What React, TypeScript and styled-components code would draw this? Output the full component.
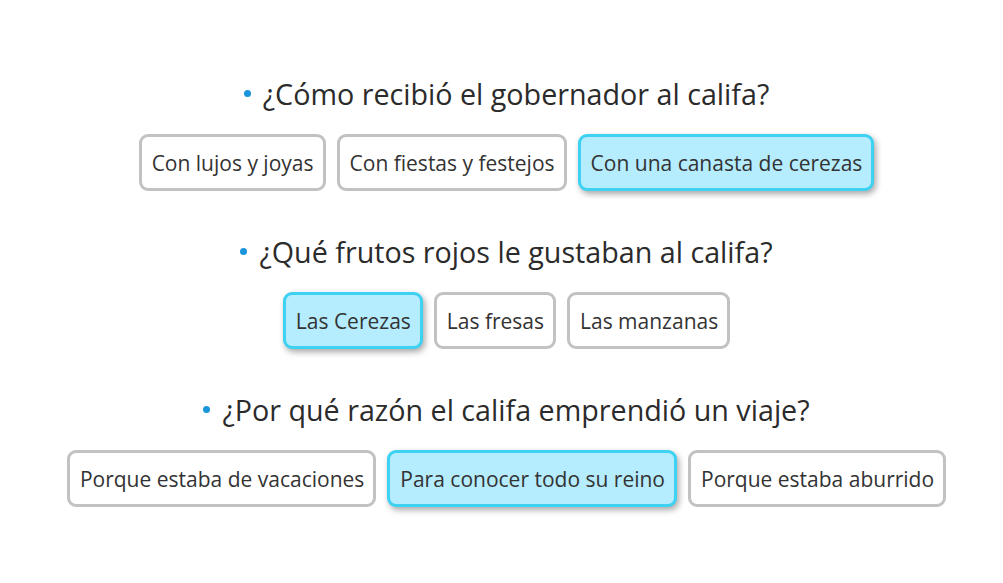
import styled, { createGlobalStyle } from "styled-components";

const GlobalStyle = createGlobalStyle`
  body {
    margin: 0;
    background: #ffffff;
    font-family: "Open Sans", "Noto Sans", sans-serif;
  }
`;

const questions = [
  {
    title: "¿Cómo recibió el gobernador al califa?",
    options: ["Con lujos y joyas", "Con fiestas y festejos", "Con una canasta de cerezas"],
    selected: 2,
  },
  {
    title: "¿Qué frutos rojos le gustaban al califa?",
    options: ["Las Cerezas", "Las fresas", "Las manzanas"],
    selected: 0,
  },
  {
    title: "¿Por qué razón el califa emprendió un viaje?",
    options: ["Porque estaba de vacaciones", "Para conocer todo su reino", "Porque estaba aburrido"],
    selected: 1,
  },
];

const App = () => {
  return (
    <Page>
      <GlobalStyle />
      {questions.map((q) => (
        <Question key={q.title}>
          <Title>
            <Bullet />
            {q.title}
          </Title>
          <Options>
            {q.options.map((opt, i) => (
              <Option key={opt} $selected={i === q.selected}>
                {opt}
              </Option>
            ))}
          </Options>
        </Question>
      ))}
    </Page>
  );
};

export default App;

const Page = styled.div`
  width: 1003px;
  height: 583px;
  box-sizing: border-box;
  padding-top: 76px;
  padding-left: 10px;

  display: flex;
  flex-direction: column;
  align-items: center;
  gap: 43px;
`;

const Question = styled.div`
  display: flex;
  flex-direction: column;
  align-items: center;
  gap: 24px;
`;

const Title = styled.div`
  display: flex;
  align-items: center;
  height: 34px;
  font-size: 28.7px;
  color: #2b2b2b;
`;

const Bullet = styled.span`
  width: 7px;
  height: 7px;
  border-radius: 50%;
  background: #1a95dc;
  margin-right: 12px;
`;

const Options = styled.div`
  display: flex;
  gap: 11px;
`;

const Option = styled.div<{ $selected: boolean }>`
  height: 57px;
  box-sizing: border-box;
  padding: 0 9px 0 10px;

  display: flex;
  align-items: center;

  font-size: 21px;
  color: #333333;
  border-radius: 9px;
  border: 3px solid ${(p) => (p.$selected ? "#3dd2f2" : "#c2c2c2")};
  background: ${(p) => (p.$selected ? "#b5ecfe" : "#ffffff")};
  box-shadow: ${(p) => (p.$selected ? "2px 3px 6px rgba(0, 0, 0, 0.35)" : "none")};
`;
